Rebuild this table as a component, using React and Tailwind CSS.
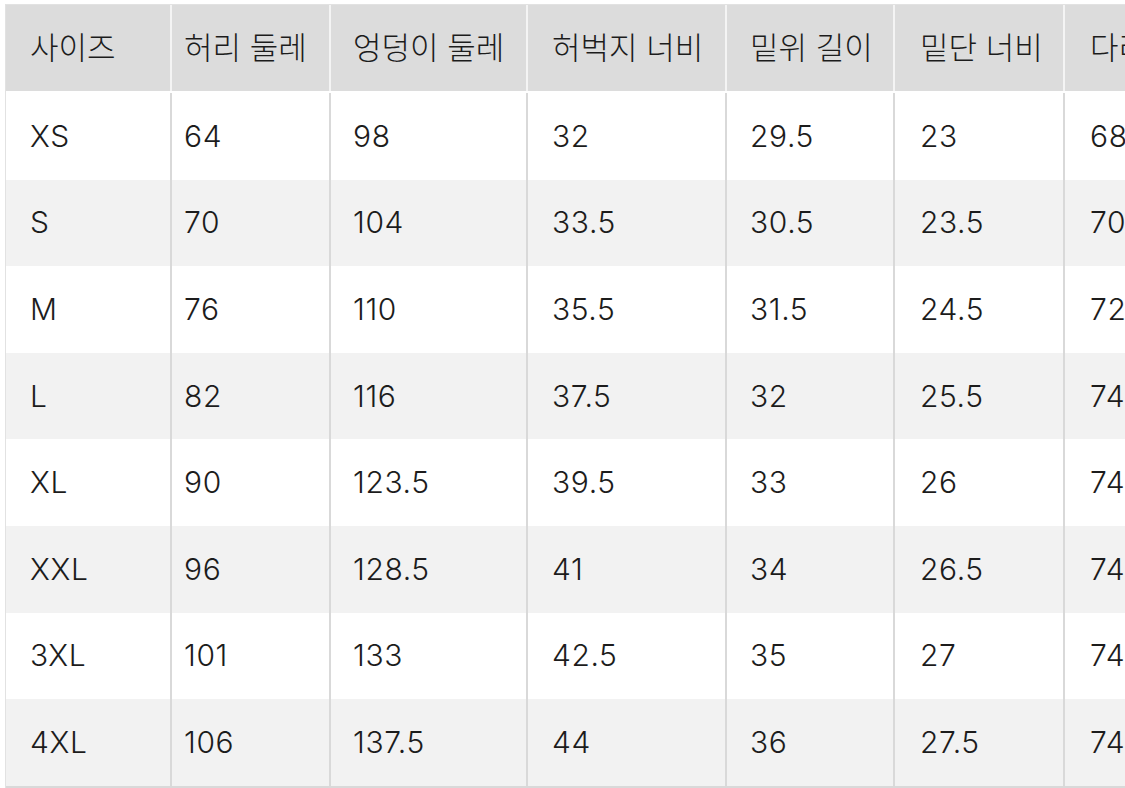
const headers = ["사이즈", "허리 둘레", "엉덩이 둘레", "허벅지 너비", "밑위 길이", "밑단 너비", "다리 길이"];

const rows = [
  ["XS", "64", "98", "32", "29.5", "23", "68"],
  ["S", "70", "104", "33.5", "30.5", "23.5", "70"],
  ["M", "76", "110", "35.5", "31.5", "24.5", "72"],
  ["L", "82", "116", "37.5", "32", "25.5", "74"],
  ["XL", "90", "123.5", "39.5", "33", "26", "74"],
  ["XXL", "96", "128.5", "41", "34", "26.5", "74"],
  ["3XL", "101", "133", "42.5", "35", "27", "74"],
  ["4XL", "106", "137.5", "44", "36", "27.5", "74"],
];

const widths = ["w-[166px]", "w-[159px]", "w-[197px]", "w-[199px]", "w-[168px]", "w-[170px]", "w-[170px]"];
const pads = ["pl-6", "pl-3", "pl-[22px]", "pl-6", "pl-[23px]", "pl-[25px]", "pl-[25px]"];

export default function App() {
  return (
    <div
      className="w-[1125px] h-[788px] overflow-hidden bg-white pl-[5px] pt-[4px] text-[#1c1c1c]"
      style={{ fontFamily: '"Inter", "Noto Sans CJK KR", sans-serif' }}
    >
      <div className="w-[1240px] border-l border-t border-[#e2e2e2]">
        <div className="flex h-[88px] bg-[#dcdcdc] border-b-2 border-white">
          {headers.map((h, i) => (
            <div
              key={h}
              className={`${widths[i]} ${pads[i]} shrink-0 flex items-center border-r-2 border-[#f4f4f4] text-[31px] font-light whitespace-nowrap`}
            >
              {h}
            </div>
          ))}
        </div>
        {rows.map((r, ri) => (
          <div
            key={r[0]}
            className={`flex h-[86.6px] ${ri % 2 === 0 ? "bg-white" : "bg-[#f2f2f2]"}`}
          >
            {r.map((c, i) => (
              <div
                key={i}
                className={`${widths[i]} ${pads[i]} shrink-0 flex items-center border-r-2 border-[#d9d9d9] text-[30px] font-light tracking-[0.6px]`}
              >
                {c}
              </div>
            ))}
          </div>
        ))}
        <div className="h-[2px] bg-[#d9d9d9]" />
      </div>
    </div>
  );
}
